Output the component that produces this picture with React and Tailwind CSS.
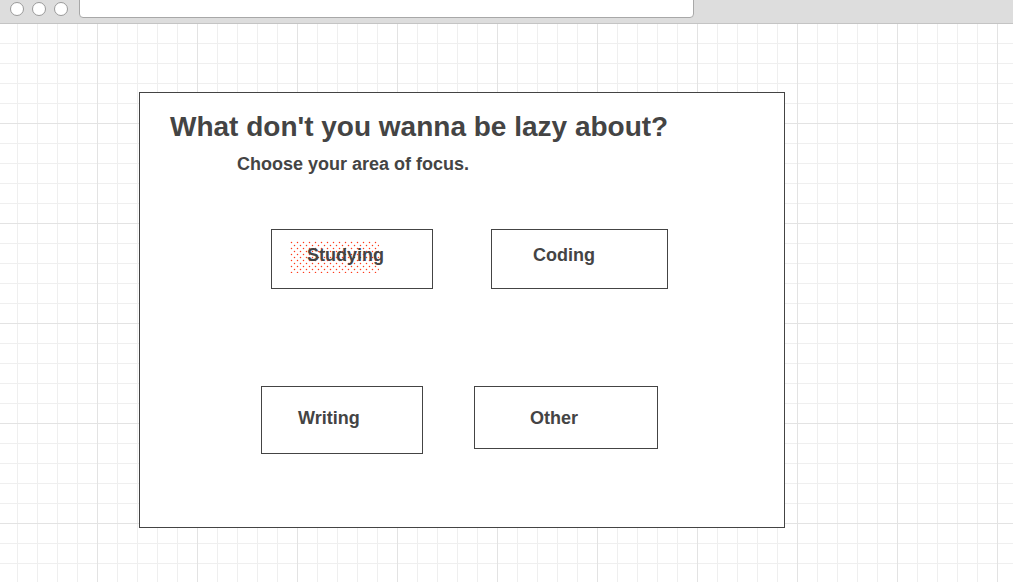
import React from 'react';

const FocusButton = ({ label, className, textClass, children }) => (
  <div className={`relative shrink-0 border border-[#444] bg-white ${className}`}>
    {children}
    <span className={`relative z-10 block text-[18px] font-bold leading-[20px] text-[#444] ${textClass}`}>
      {label}
    </span>
  </div>
);

// red dotted selection marker behind "Studying"
const DotMarker = () => {
  const dots = [];
  let row = 0;
  for (let y = 1.5; y < 32; y += 3) {
    const shift = row % 2 === 0 ? 1.5 : 4.5;
    for (let x = shift; x < 89; x += 6) {
      dots.push(<circle key={`${x}-${y}`} cx={x} cy={y} r="0.72" />);
    }
    row += 1;
  }
  return (
    <svg className="absolute left-[18px] top-[11px]" width="89" height="32">
      <g style={{ fill: '#ff3a1a' }}>{dots}</g>
    </svg>
  );
};

const App = () => {
  return (
    <div className="flex h-[582px] w-[1013px] flex-col overflow-hidden bg-white font-['Liberation_Sans',Arial,sans-serif]">
      {/* Browser chrome */}
      <div className="flex h-[24px] shrink-0 items-start border-b border-[#c4c4c4] bg-[#dddddd] pl-[10px]">
        <div className="mt-[2px] flex gap-[8px]">
          <span className="block h-[14px] w-[14px] rounded-full border border-[#9a9a9a] bg-white" />
          <span className="block h-[14px] w-[14px] rounded-full border border-[#9a9a9a] bg-white" />
          <span className="block h-[14px] w-[14px] rounded-full border border-[#9a9a9a] bg-white" />
        </div>
        <div className="ml-[11px] -mt-px h-[19px] w-[615px] rounded-b-[4px] border border-[#a8a8a8] bg-white" />
      </div>

      {/* Grid canvas */}
      <div className="flex-1 bg-white bg-[linear-gradient(to_right,#e3e3e3_1px,transparent_1px),linear-gradient(to_bottom,#e3e3e3_1px,transparent_1px),linear-gradient(to_right,#efefef_1px,transparent_1px),linear-gradient(to_bottom,#efefef_1px,transparent_1px)] bg-[length:100px_100px,100px_100px,20px_20px,20px_20px] bg-[position:-3px_-1px,-3px_-1px,-3px_-1px,-3px_-1px]">
        <div className="ml-[139px] mt-[68px] h-[436px] w-[646px] border border-[#444] bg-white pl-[30px] pt-[18px]">
          <h1 className="text-[28px] font-bold leading-[32px] text-[#444]">
            What don't you wanna be lazy about?
          </h1>
          <p className="ml-[67px] mt-[11px] text-[18px] font-bold leading-[20px] text-[#444]">
            Choose your area of focus.
          </p>

          <div className="ml-[101px] mt-[55px] flex items-start gap-[58px]">
            <FocusButton label="Studying" className="h-[60px] w-[162px]" textClass="pl-[35px] pt-[15px]">
              <DotMarker />
            </FocusButton>
            <FocusButton label="Coding" className="h-[60px] w-[177px]" textClass="pl-[41px] pt-[15px]" />
          </div>

          <div className="ml-[91px] mt-[97px] flex items-start gap-[51px]">
            <FocusButton label="Writing" className="h-[68px] w-[162px]" textClass="pl-[36px] pt-[21px]" />
            <FocusButton label="Other" className="h-[63px] w-[184px]" textClass="pl-[55px] pt-[21px]" />
          </div>
        </div>
      </div>
    </div>
  );
};

export default App;
